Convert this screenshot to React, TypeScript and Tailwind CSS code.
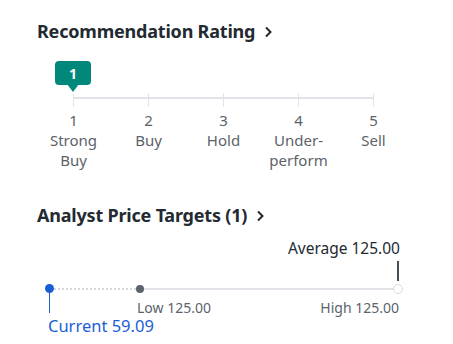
import React from 'react';

const SCALE = [
  { n: '1', label: ['Strong', 'Buy'] },
  { n: '2', label: ['Buy'] },
  { n: '3', label: ['Hold'] },
  { n: '4', label: ['Under-', 'perform'] },
  { n: '5', label: ['Sell'] },
];

function Chevron() {
  return (
    <svg width="9" height="12" viewBox="0 0 9 12" className="ml-[9px] mt-[2px]">
      <path d="M2 1.5 L6.5 6 L2 10.5" fill="none" stroke="#232a31" strokeWidth="2" />
    </svg>
  );
}

export default function App() {
  // price positions on the target bar (px from bar start)
  const low = 91;
  const high = 349;

  return (
    <div className="w-[453px] h-[344px] bg-white overflow-hidden" style={{ fontFamily: '"Noto Sans", "Open Sans", sans-serif' }}>
      <h2 className="flex items-center pl-[37px] pt-[19px] text-[18px] leading-[24px] font-bold text-[#232a31] tracking-[-0.2px]">
        Recommendation Rating <Chevron />
      </h2>

      {/* rating scale */}
      <div className="ml-[36px] w-[375px] mt-[18px]">
        <div className="relative h-[40px]">
          <div className="absolute left-[19px] top-0 w-[36px] h-[24px] rounded-[4px] bg-[#00897b] flex items-center justify-center text-white text-[14px] font-bold">
            1
          </div>
          <div className="absolute left-[31px] top-[23px] w-0 h-0 border-l-[6px] border-r-[6px] border-t-[8px] border-l-transparent border-r-transparent border-t-[#00897b]" />
          <div className="absolute left-[37px] right-[37px] top-[36px] h-[2px] bg-[#e0e4e9]" />
        </div>
        <div className="grid grid-cols-5 -mt-[8px]">
          {SCALE.map((s) => (
            <div key={s.n} className="flex flex-col items-center">
              <div className="w-px h-[14px] bg-[#e0e4e9]" />
              <div className="mt-[3px] text-[15px] leading-[20px] text-[#5b636a] text-center">
                <div>{s.n}</div>
                {s.label.map((l) => (
                  <div key={l}>{l}</div>
                ))}
              </div>
            </div>
          ))}
        </div>
      </div>

      <h2 className="flex items-center pl-[37px] mt-[33px] text-[18px] leading-[24px] font-bold text-[#232a31] tracking-[-0.2px]">
        Analyst Price Targets (1) <Chevron />
      </h2>

      {/* price target bar */}
      <div className="ml-[49px] w-[350px] mt-[11px] flex flex-col">
        <div className="flex justify-end text-[15.5px] leading-[20px] text-[#232a31] translate-x-[1px]">Average 125.00</div>
        <div className="flex justify-end mt-[3px]">
          <div className="w-[2px] h-[20px] bg-[#464e56]" />
        </div>
        <div className="relative h-[10px] mt-[3px]">
          <div className="absolute top-[4px] left-0 h-0 border-t-2 border-dotted border-[#d7dbe0]" style={{ width: low }} />
          <div className="absolute top-[4px] h-[2px] bg-[#e0e4e9]" style={{ left: low, width: high - low }} />
          <div className="absolute top-0 w-[10px] h-[10px] rounded-full bg-white border border-[#d7dbe0]" style={{ left: high - 5 }} />
          <div className="absolute top-[1px] w-[8px] h-[8px] rounded-full bg-[#5b636a]" style={{ left: low - 4 }} />
          <div className="absolute top-[4px] left-0 w-px h-[25px] bg-[#1a5ed6]" />
          <div className="absolute top-0 -left-[4px] w-[9px] h-[9px] rounded-full bg-[#1a5ed6]" />
        </div>
        <div className="flex justify-between pl-[88px] mt-[4px] text-[14px] leading-[20px] text-[#5b636a]">
          <span>Low 125.00</span>
          <span>High 125.00</span>
        </div>
        <div className="-ml-[1px] -mt-[2px] text-[16.5px] leading-[20px] text-[#1a5ed6]">Current 59.09</div>
      </div>
    </div>
  );
}
